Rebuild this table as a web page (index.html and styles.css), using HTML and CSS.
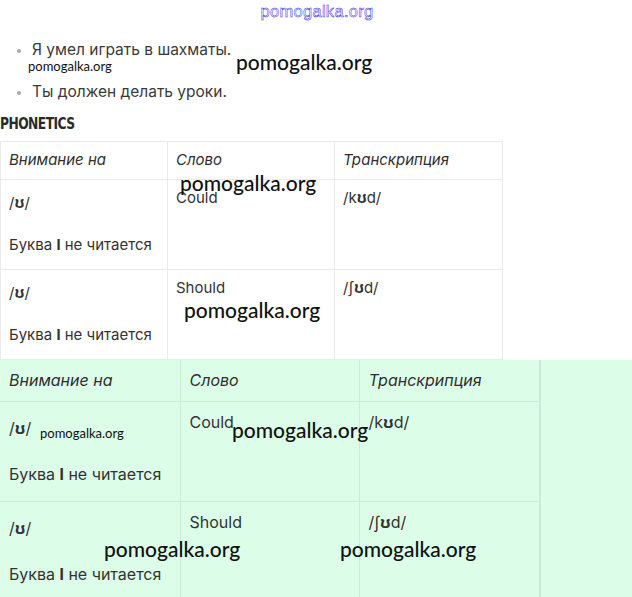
FILE: index.html
```html
<!DOCTYPE html>
<html>
<head>
<meta charset="utf-8">
<link rel="stylesheet" href="styles.css">
</head>
<body>
<div class="page">
  <div class="site-mark">pomogalka.org</div>
  <ul class="examples">
    <li>Я умел играть в шахматы.</li>
    <li>Ты должен делать уроки.</li>
  </ul>
  <span class="wm wm-s wm-a">pomogalka.org</span>
  <span class="wm wm-l wm-b">pomogalka.org</span>

  <h2 class="section-title">PHONETICS</h2>

  <table class="ph ph-white">
    <colgroup><col class="c1"><col class="c2"><col class="c3"></colgroup>
    <thead>
      <tr><th>Внимание на</th><th>Слово</th><th>Транскрипция</th></tr>
    </thead>
    <tbody>
      <tr>
        <td><div class="sound">/<b>ʊ</b>/</div><div class="note">Буква <b>l</b> не читается</div></td>
        <td><div class="word">Could</div></td>
        <td><div class="word">/k<b>ʊ</b>d/</div></td>
      </tr>
      <tr>
        <td><div class="sound">/<b>ʊ</b>/</div><div class="note">Буква <b>l</b> не читается</div></td>
        <td><div class="word">Should</div></td>
        <td><div class="word">/ʃ<b>ʊ</b>d/</div></td>
      </tr>
    </tbody>
  </table>

  <div class="green-band">
    <table class="ph ph-green">
      <colgroup><col class="c1"><col class="c2"><col class="c3"></colgroup>
      <thead>
        <tr><th>Внимание на</th><th>Слово</th><th>Транскрипция</th></tr>
      </thead>
      <tbody>
        <tr>
          <td><div class="sound">/<b>ʊ</b>/</div><div class="note">Буква <b>l</b> не читается</div></td>
          <td><div class="word">Could</div></td>
          <td><div class="word">/k<b>ʊ</b>d/</div></td>
        </tr>
        <tr>
          <td><div class="sound">/<b>ʊ</b>/</div><div class="note">Буква <b>l</b> не читается</div></td>
          <td><div class="word">Should</div></td>
          <td><div class="word">/ʃ<b>ʊ</b>d/</div></td>
        </tr>
      </tbody>
    </table>
    <div class="band-rest"></div>
  </div>

  <span class="wm wm-l wm-c">pomogalka.org</span>
  <span class="wm wm-l wm-d">pomogalka.org</span>
  <span class="wm wm-s wm-e">pomogalka.org</span>
  <span class="wm wm-l wm-f">pomogalka.org</span>
  <span class="wm wm-l wm-g">pomogalka.org</span>
  <span class="wm wm-l wm-h">pomogalka.org</span>
</div>
</body>
</html>
```

FILE: styles.css
```css
html, body {
  margin: 0;
  padding: 0;
  background: #fff;
}
.page {
  position: relative;
  width: 632px;
  height: 597px;
  overflow: hidden;
  font-family: Inter, "Noto Sans", sans-serif;
  color: #333;
}
.site-mark {
  text-align: center;
  padding-top: 2px;
  height: 22px;
  font-family: "Liberation Sans", sans-serif;
  font-size: 16.5px;
  color: #fff;
  -webkit-text-stroke: 0.5px #3030e0;
  letter-spacing: 0.3px;
  padding-left: 2px;
}
.examples {
  margin: 15px 0 0 0;
  padding: 0 0 0 32px;
  list-style: none;
  font-size: 15.5px;
  color: #3a3a3a;
}
.examples li {
  position: relative;
  line-height: 22px;
  height: 22px;
  margin-bottom: 20px;
}
.examples li::before {
  content: "";
  position: absolute;
  left: -15px;
  top: 10px;
  width: 4px;
  height: 4px;
  border-radius: 50%;
  background: #aaa;
}
.section-title {
  margin: -11px 0 0 0;
  height: 24px;
  font-family: "DejaVu Sans", sans-serif;
  font-stretch: condensed;
  font-weight: 700;
  font-size: 15.5px;
  line-height: 24px;
  color: #2a2a2a;
  letter-spacing: -0.6px;
  transform: scaleX(0.88);
  transform-origin: left center;
}
.ph {
  border-collapse: collapse;
  table-layout: fixed;
}
.ph th, .ph td {
  border: 1px solid #ebebeb;
  text-align: left;
  vertical-align: top;
  padding: 0 8px;
}
.ph th {
  font-weight: 400;
  font-style: italic;
  color: #2f2f2f;
}
.ph b { font-weight: 700; }
.ph-white {
  margin-top: 5px;
  width: 502px;
  font-size: 15px;
}
.ph-white col.c1 { width: 167px; }
.ph-white col.c2 { width: 167px; }
.ph-white col.c3 { width: 168px; }
.ph-white th { height: 37px; line-height: 36px; padding-top: 0; padding-bottom: 0; }
.ph-white td { height: 89px; }
.ph-white .sound { margin-top: 13px; line-height: 20px; }
.ph-white .note { margin-top: 22px; line-height: 20px; }
.ph-white .word { margin-top: 8px; line-height: 20px; }

.green-band {
  display: flex;
  background: #dcfde8;
  height: 240px;
}
.ph-green {
  width: 539px;
  font-size: 16px;
  flex: none;
}
.ph-green th, .ph-green td {
  border-color: #cdebd8;
  padding: 0 9px;
}
.ph-green tr:first-child th { border-top: none; }
.ph-green tr:last-child td { border-bottom: none; }
.ph-green th:first-child, .ph-green td:first-child { border-left: none; }
.ph-green col.c1 { width: 180px; }
.ph-green col.c2 { width: 179px; }
.ph-green col.c3 { width: 180px; }
.ph-green th { height: 41px; line-height: 41px; }
.ph-green td { height: 96px; }
.ph-green .sound { margin-top: 15px; line-height: 22px; }
.ph-green .note { margin-top: 24px; line-height: 22px; }
.ph-green .word { margin-top: 9px; line-height: 22px; }
.band-rest {
  flex: 1;
  border-left: 1px solid #cdebd8;
}

.wm {
  position: absolute;
  font-family: Lato, sans-serif;
  color: #111;
  white-space: nowrap;
  line-height: 1;
}
.wm-l { font-size: 21px; font-weight: 500; }
.wm-s { font-size: 13px; }
.wm-a { left: 28px; top: 60px; }
.wm-b { left: 236px; top: 51px; }
.wm-c { left: 180px; top: 172px; }
.wm-d { left: 184px; top: 299px; }
.wm-e { left: 40px; top: 427px; }
.wm-f { left: 232px; top: 419px; }
.wm-g { left: 104px; top: 538px; }
.wm-h { left: 340px; top: 538px; }
```
